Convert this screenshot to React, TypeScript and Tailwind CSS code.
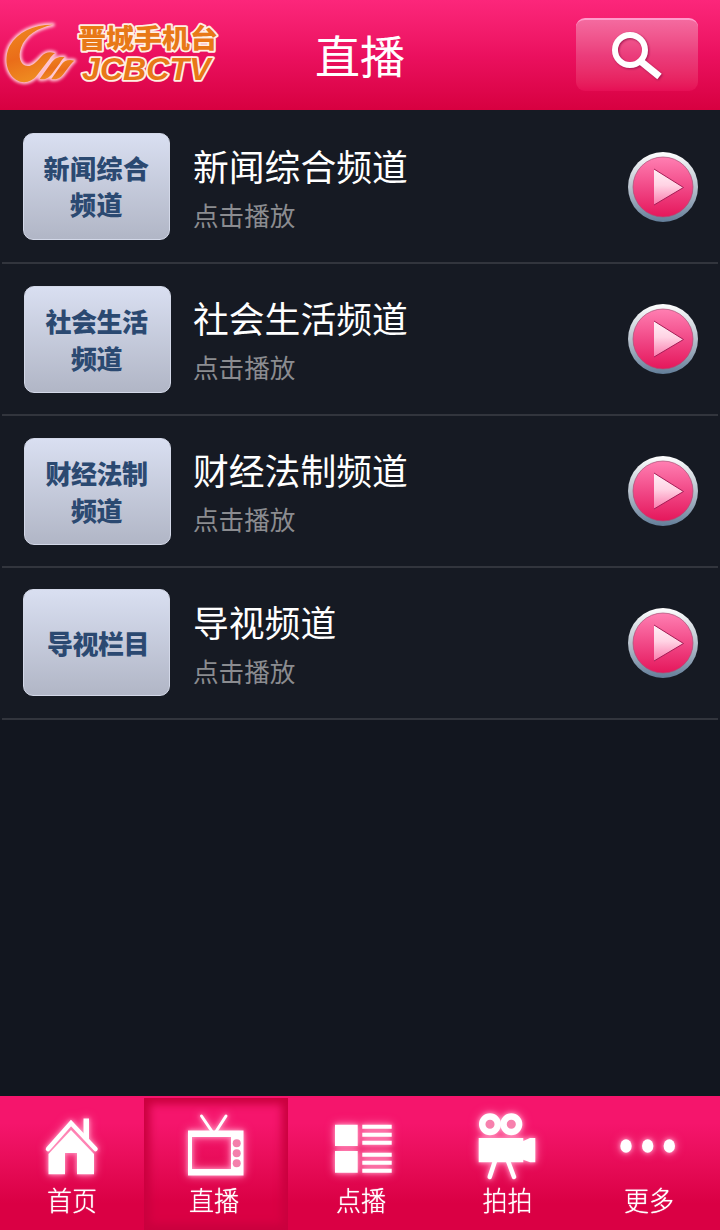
import { ReactNode } from "react"

type Channel = {
  name: string
  thumb: string[]
  thumbClass: string
  textClass: string
}

const channels: Channel[] = [
  { name: "新闻综合频道", thumb: ["新闻综合", "频道"], thumbClass: "ml-[23px] mt-[-2px] mr-[23px]", textClass: "leading-[36px] tracking-[0.5px]" },
  { name: "社会生活频道", thumb: ["社会生活", "频道"], thumbClass: "ml-6 mr-[22px]", textClass: "-ml-0.5 leading-[37px] tracking-[-0.5px]" },
  { name: "财经法制频道", thumb: ["财经法制", "频道"], thumbClass: "ml-6 mr-[22px]", textClass: "-ml-0.5 leading-[37px] tracking-[-0.5px]" },
  { name: "导视频道", thumb: ["导视栏目"], thumbClass: "ml-[23px] mt-[-2px] mr-[23px]", textClass: "ml-[3px] leading-[37px] tracking-[-0.5px]" },
]

function Logo() {
  return <svg width="240" height="110" viewBox="0 0 720 330" className="shrink-0">
    <defs>
      <linearGradient id="swoosh" x1="0" y1="0" x2="0.3" y2="1">
        <stop offset="0" stopColor="#ef8a20" />
        <stop offset="0.6" stopColor="#ea6d19" />
        <stop offset="1" stopColor="#ee8a20" />
      </linearGradient>
      <filter id="halo" x="-20%" y="-20%" width="140%" height="140%">
        <feGaussianBlur stdDeviation="4" />
      </filter>
      <g id="mark">
        <path d="M159 74C105 73 53 94 29 138C12 172 17 218 48 239C69 253 96 247 111 226L148 178C153 170 159 164 165 160C146 153 136 158 126 167C109 185 98 198 83 198C60 196 54 169 63 143C76 106 113 83 159 74Z" />
        <path d="M194 172C174 168 164 176 155 187L119 237C140 241 150 230 158 219L180 189C184 181 188 177 194 172Z" />
        <path d="M223 182C202 177 192 184 184 194L154 237C174 241 184 230 191 221L209 197C214 190 218 186 223 182Z" />
      </g>
    </defs>
    <use href="#mark" fill="#ffe0c8" stroke="#ffc8d4" strokeWidth="12" strokeLinejoin="round" filter="url(#halo)" />
    <use href="#mark" fill="url(#swoosh)" />
    <g fill="#e87817" stroke="#fff0e4" strokeWidth="11" strokeLinejoin="round" paintOrder="stroke">
      <text x="234" y="143" textLength="420" lengthAdjust="spacingAndGlyphs" fontSize="78" fontWeight="900" fontFamily="'Noto Sans CJK SC', sans-serif">晋城手机台</text>
      <text x="246" y="240" textLength="386" lengthAdjust="spacingAndGlyphs" fontSize="92" fontWeight="bold" fontStyle="italic" fontFamily="'Liberation Sans', sans-serif">JCBCTV</text>
    </g>
  </svg>
}

function Header() {
  return <header className="flex h-[110px] shrink-0 justify-between bg-linear-to-b from-[#fc267b] via-[#eb105f] to-[#d70040]">
    <Logo />
    <h1 className="mt-[23px] text-[45px] leading-[64px] font-normal text-white">直播</h1>
    <div className="flex w-[240px] justify-end pr-[22px] pt-[18px]">
      <button className="h-[73px] w-[122px] rounded-[9px] border-t-2 border-[#ff9ccb] bg-linear-to-b from-[#f46a9f] via-[#eb3c7b] to-[#e60e55]">
        <svg width="122" height="71" viewBox="0 0 122 71" fill="none" className="drop-shadow-[1px_1px_1px_#a3164f]">
          <circle cx="54" cy="30" r="15" stroke="#fff" strokeWidth="6" />
          <path d="M65 41.5L83.500 56.500" stroke="#fff" strokeWidth="7" />
        </svg>
      </button>
    </div>
  </header>
}

function PlayIcon() {
  return <svg width="70" height="70" viewBox="0 0 70 70" className="mt-[-1px] mr-5 shrink-0">
    <defs>
      <linearGradient id="rim" x2="0" y2="1">
        <stop offset="0" stopColor="#fff" />
        <stop offset="0.5" stopColor="#b9c2cd" />
        <stop offset="1" stopColor="#637e99" />
      </linearGradient>
      <linearGradient id="disc" x2="0" y2="1">
        <stop offset="0" stopColor="#ff7fb2" />
        <stop offset="0.55" stopColor="#f04483" />
        <stop offset="1" stopColor="#e5175b" />
      </linearGradient>
      <linearGradient id="arrow" x2="0" y2="1">
        <stop offset="0" stopColor="#fff0f6" />
        <stop offset="0.45" stopColor="#ffd3e4" />
        <stop offset="1" stopColor="#fa7aac" />
      </linearGradient>
    </defs>
    <circle cx="35" cy="35" r="35" fill="url(#rim)" />
    <circle cx="35" cy="35" r="30" fill="url(#disc)" stroke="#a94f76" strokeWidth="0.7" />
    <path d="M26 17L55.500 35.500L26 53Z" fill="url(#arrow)" />
    <path d="M26 17L55.500 35.500L26 53" fill="none" stroke="#a51c55" strokeWidth="1" />
  </svg>
}

function ChannelRow({ channel }: { channel: Channel }) {
  return <li className="mx-0.5 flex h-[152px] items-center border-b-2 border-[#32353d]">
    <div className={`${channel.thumbClass} -translate-x-0.5 flex h-[107px] w-[147px] shrink-0 flex-col items-center justify-center rounded-[10px] border border-[#d3d8e8] bg-linear-to-b from-[#d9dff1] to-[#b1b6c6] text-[26px] font-black text-[#2b4971]`}>
      {channel.thumb.map(line => <span key={line} className={channel.textClass}>{line}</span>)}
    </div>
    <div className="-ml-0.5 flex-1 pt-1.5">
      <h2 className="text-[35.8px] leading-[50px] font-normal text-white">{channel.name}</h2>
      <p className="text-[25.6px] leading-[50px] text-[#8b8c90]">点击播放</p>
    </div>
    <PlayIcon />
  </li>
}

function HomeIcon() {
  return <>
    <path d="M83.500 14.500h5.500v22l-5.500-5z" />
    <path d="M48.500 50L71 26L94 50V70.300H77V49H65V70.300H48.500Z" />
    <path d="M48 45L71 19L95.500 45" fill="none" stroke="#fff" strokeWidth="4.500" strokeLinecap="round" strokeLinejoin="miter" />
  </>
}

function TvIcon() {
  return <>
    <path fillRule="evenodd" d="M44 26.500H99.500V71.500H44ZM48 33V65H87V33Z" />
    <path d="M57.500 12L68 27.500M82 12L72 27.500" stroke="#fff" strokeWidth="3" strokeLinecap="round" />
    <g fill="#f47fab">
      <circle cx="92.700" cy="39.300" r="4" />
      <circle cx="92.700" cy="49.300" r="4" />
      <circle cx="92.700" cy="59.300" r="4" />
    </g>
  </>
}

function ListIcon() {
  return <>
    <path d="M47 20.700h22.700V42H47zM47 47h22.700v21.700H47z" />
    <path d="M74.300 22.700H103.700M74.300 30.700H103.700M74.300 38.700H103.700M74.300 50.700H103.700M74.300 58.700H103.700M74.300 66.700H103.700" stroke="#fff" strokeWidth="4" />
  </>
}

function CameraIcon() {
  return <>
    <g stroke="#fff" strokeWidth="6.500" fill="#f780ad">
      <circle cx="58" cy="20.300" r="7.800" />
      <circle cx="79.300" cy="20.300" r="7.800" />
    </g>
    <path d="M46.700 34H91.300V37L98 34H103.300V58.300H98L91.300 55.700V58.300H46.700Z" />
    <path d="M63 57L57.700 73M76 57L82 73" stroke="#fff" strokeWidth="4.500" strokeLinecap="round" />
  </>
}

function MoreIcon() {
  return <>
    <ellipse cx="50" cy="42" rx="5.700" ry="6.700" />
    <ellipse cx="71.700" cy="42" rx="5.700" ry="6.700" />
    <ellipse cx="93.300" cy="42" rx="5.700" ry="6.700" />
  </>
}

const tabs: { label: string, icon: ReactNode, labelClass: string }[] = [
  { label: "首页", icon: <HomeIcon />, labelClass: "" },
  { label: "直播", icon: <TvIcon />, labelClass: "mr-1" },
  { label: "点播", icon: <ListIcon />, labelClass: "ml-0.5" },
  { label: "拍拍", icon: <CameraIcon />, labelClass: "ml-[7px]" },
  { label: "更多", icon: <MoreIcon />, labelClass: "ml-0.5" },
]

function TabBar({ active }: { active: string }) {
  return <nav className="grid h-[134px] shrink-0 grid-cols-5 bg-linear-to-b from-[#f5156c] from-20% to-[#da0044] to-80% pt-0.5">
    {tabs.map(tab => <button
      key={tab.label}
      className={`flex flex-col items-center pt-1.5 text-white ${tab.label === active ? "shadow-[inset_0_0_9px_6px_#c9003e]" : ""}`}
    >
      <svg width="144" height="80" viewBox="0 0 144 80" fill="#fff" className="shrink-0 [filter:drop-shadow(0_0_2px_#ff9cc4)_drop-shadow(0_0_4px_#ff70a8)]">
        {tab.icon}
      </svg>
      <span className={`${tab.labelClass} -mt-px scale-y-110 text-[25px] leading-[32px] font-light [text-shadow:0_0_1px_#fff]`}>{tab.label}</span>
    </button>)}
  </nav>
}

export default function App() {
  return <div className="flex h-[1230px] w-[720px] flex-col overflow-hidden bg-[#12161f] font-['Noto_Sans_CJK_SC',sans-serif]">
    <Header />
    <main className="flex-1">
      <ul className="bg-[#161a23] pt-0.5">
        {channels.map(channel => <ChannelRow key={channel.name} channel={channel} />)}
      </ul>
    </main>
    <TabBar active="直播" />
  </div>
}
